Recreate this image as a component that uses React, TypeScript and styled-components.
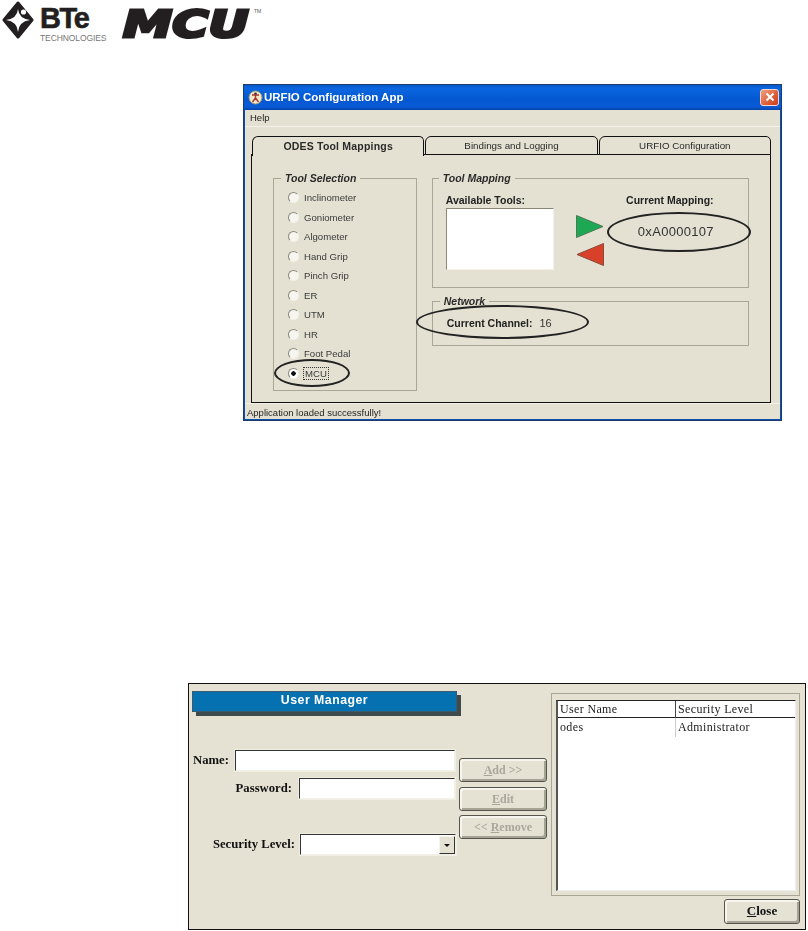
import styled, { createGlobalStyle } from 'styled-components'

const GlobalStyle = createGlobalStyle`
  html, body { margin: 0; padding: 0; background: #fff; }
  body { font-family: "Liberation Sans", Arial, sans-serif; }
`

const Page = styled.div`
  width: 808px;
  height: 931px;
  overflow: hidden;
  display: flex;
  flex-direction: column;
`

/* logos */
const Header = styled.div`
  height: 40px;
  display: flex;
  align-items: flex-start;
  padding: 1px 0 0 2px;
  box-sizing: border-box;
`
const BrandText = styled.div`
  margin-left: 6px;
  width: 68px;
  display: flex;
  flex-direction: column;
`
const Bte = styled.div`
  font-size: 29px;
  font-weight: 700;
  line-height: 26px;
  height: 29px;
  letter-spacing: -1.4px;
  color: #231f20;
  margin-top: 4px;
  -webkit-text-stroke: 0.6px #231f20;
`
const Tech = styled.div`
  font-size: 8.5px;
  line-height: 8px;
  color: #777;
  white-space: nowrap;
  letter-spacing: -0.1px;
`
const Mcu = styled.div`
  margin: 7px 0 0 15px;
  font-family: "DejaVu Sans", sans-serif;
  font-size: 38px;
  line-height: 32px;
  height: 32px;
  width: 130px;
  font-weight: 700;
  font-style: italic;
  color: #231f20;
  -webkit-text-stroke: 3px #231f20;
  transform: scaleX(1.3);
  transform-origin: left center;
  white-space: nowrap;
`
const TradeMark = styled.div`
  margin: 7px 0 0 1px;
  font-size: 5px;
  color: #555;
`

/* XP style window */
const AppRow = styled.div`
  margin: 44px 0 0 243px;
`
const AppWindow = styled.div`
  width: 539px;
  height: 337px;
  box-sizing: border-box;
  background: #e4e1d2;
  border: 2px solid #0b4fa8;
  border-top: 0;
  outline: 1px solid #1c3c70;
  outline-offset: -1px;
  display: flex;
  flex-direction: column;
  filter: blur(0.35px);
`
const TitleBar = styled.div`
  height: 26px;
  flex: none;
  margin: 0 -2px;
  padding: 0 3px 0 5px;
  display: flex;
  align-items: center;
  gap: 1px;
  background: linear-gradient(180deg, #0a56c4 0%, #0a66e0 18%, #0458d0 60%, #0a5ad8 88%, #0443a8 100%);
`
const TitleText = styled.div`
  color: #fff;
  font-size: 11.5px;
  font-weight: 700;
  flex: 1;
`
const CloseBox = styled.div`
  width: 19px;
  height: 17px;
  box-sizing: border-box;
  border: 1px solid #f4d9cc;
  border-radius: 3px;
  background: linear-gradient(135deg, #f0a080, #d8532f 70%, #c84020);
  color: #fff;
  display: flex;
  align-items: center;
  justify-content: center;
`
const MenuBar = styled.div`
  height: 17px;
  flex: none;
  padding-left: 5px;
  font-size: 9.5px;
  line-height: 15px;
  color: #222;
  border-bottom: 1px solid #f3f1e7;
  box-sizing: border-box;
`
const TabArea = styled.div`
  flex: 1;
  padding: 9px 9px 0 6px;
  display: flex;
  flex-direction: column;
  min-height: 0;
`
const TabStrip = styled.div`
  display: flex;
  flex: none;
  height: 19px;
  padding-left: 1px;
  gap: 1px;
  position: relative;
  z-index: 1;
`
const Tab = styled.div<{ $active?: boolean }>`
  flex: 1;
  box-sizing: border-box;
  height: ${p => (p.$active ? '20px' : '19px')};
  border: 1px solid #111;
  border-bottom: ${p => (p.$active ? '0' : '1px solid #111')};
  border-radius: 6px 5px 0 0;
  background: #e4e1d2;
  text-align: center;
  font-size: ${p => (p.$active ? '10.5px' : '9.8px')};
  font-weight: ${p => (p.$active ? 700 : 400)};
  letter-spacing: ${p => (p.$active ? '0.2px' : '0')};
  line-height: 18px;
  color: #2a2a2a;
`
const TabPanel = styled.div`
  flex: 1;
  min-height: 0;
  margin-top: -1px;
  border: 1px solid #111;
  padding: 18px 21px 0 21px;
  display: flex;
  gap: 15px;
  box-sizing: border-box;
`
const Group = styled.fieldset`
  margin: 0;
  padding: 0;
  box-sizing: border-box;
  border: 1px solid #a9a696;
  min-width: 0;
`
const SelectionGroup = styled(Group)`
  width: 144px;
  height: 218px;
  position: relative;
  padding: 4px 0 0 14px;
`
const RightColumn = styled.div`
  display: flex;
  flex-direction: column;
  gap: 8px;
  width: 318px;
`
const MappingGroup = styled(Group)`
  height: 115px;
  padding: 9px 0 0 13px;
  display: flex;
`
const NetworkGroup = styled(Group)`
  height: 50px;
  position: relative;
  padding: 9px 0 0 14px;
`
const GroupTitle = styled.legend`
  margin-left: -7px;
  padding: 0 4px;
  font-size: 10.5px;
  line-height: 11px;
  font-weight: 700;
  font-style: italic;
  color: #2a2a2a;
`
const RadioRow = styled.div`
  display: flex;
  align-items: center;
  height: 19.5px;
  gap: 5px;
  font-size: 9.6px;
  color: #3a3a3a;
`
const RadioDot = styled.span<{ $on?: boolean }>`
  width: 11px;
  height: 11px;
  flex: none;
  box-sizing: border-box;
  border-radius: 50%;
  border: 1px solid;
  border-color: #8b897c #f3f1e8 #f3f1e8 #8b897c;
  background: ${p => (p.$on ? 'radial-gradient(circle, #111 0 2px, #fff 2.5px)' : '#f6f5ef')};
`
const FocusLabel = styled.span`
  outline: 1px dotted #333;
  padding: 0 1px;
`
const RadioOval = styled.div`
  position: absolute;
  left: 0;
  top: 175px;
  width: 76px;
  height: 28px;
  box-sizing: border-box;
  border: 2px solid #222;
  border-radius: 50%;
  pointer-events: none;
`
const ToolsColumn = styled.div`
  width: 108px;
  flex: none;
`
const BoldLabel = styled.div`
  font-size: 10.5px;
  line-height: 14px;
  font-weight: 700;
  color: #222;
  white-space: nowrap;
`
const ToolsBox = styled.div`
  margin-top: 1px;
  height: 62px;
  box-sizing: border-box;
  background: #fff;
  border: 1px solid;
  border-color: #8a8778 #f4f2ea #f4f2ea #8a8778;
`
const Arrows = styled.div`
  display: flex;
  flex-direction: column;
  gap: 5px;
  margin: 22px 0 0 22px;
  width: 28px;
  flex: none;
`
const MappingColumn = styled.div`
  position: relative;
  flex: 1;
  display: flex;
  flex-direction: column;
  align-items: center;
`
const MappingTitle = styled(BoldLabel)`
  margin-right: 12px;
`
const MappingValue = styled.div`
  margin-top: 17px;
  font-size: 13px;
  line-height: 15px;
  letter-spacing: 0.3px;
  color: #333;
`
const MappingOval = styled.div`
  position: absolute;
  left: 3px;
  top: 19px;
  width: 144px;
  height: 40px;
  box-sizing: border-box;
  border: 2px solid #222;
  border-radius: 50%;
`
const ChannelRow = styled.div`
  display: flex;
  gap: 7px;
  font-size: 11px;
  line-height: 14px;
  color: #333;
`
const ChannelOval = styled.div`
  position: absolute;
  left: -17px;
  top: -2px;
  width: 173px;
  height: 34px;
  box-sizing: border-box;
  border: 2px solid #222;
  border-radius: 50%;
`
const StatusBar = styled.div`
  flex: none;
  height: 16px;
  padding-left: 2px;
  font-size: 9.5px;
  line-height: 17px;
  color: #222;
  border-top: 1px solid #f3f1e7;
  box-sizing: border-box;
`

/* user manager dialog */
const DialogRow = styled.div`
  margin: 262px 0 0 188px;
`
const Dialog = styled.div`
  width: 618px;
  height: 247px;
  box-sizing: border-box;
  background: #e6e2d3;
  border: 1px solid #111;
  padding: 7px 5px 0 3px;
  display: flex;
  gap: 3px;
  font-family: "Liberation Serif", "Times New Roman", serif;
  filter: blur(0.3px);
`
const LeftPane = styled.div`
  width: 356px;
  flex: none;
`
const Banner = styled.div`
  width: 265px;
  height: 21px;
  box-sizing: border-box;
  background: #0671b0;
  border: 1px solid #3a5a70;
  box-shadow: 4px 4px 0 #3f4a4c;
  color: #fff;
  text-align: center;
  font-family: "Liberation Sans", Arial, sans-serif;
  font-size: 12.3px;
  font-weight: 700;
  line-height: 17px;
  letter-spacing: 0.5px;
`
const FormArea = styled.div`
  margin-top: 38px;
  display: flex;
  gap: 3px;
`
const Fields = styled.div`
  width: 264px;
  flex: none;
  display: flex;
  flex-direction: column;
`
const FieldRow = styled.div<{ $top?: number; $gap?: number; $inset?: number }>`
  display: flex;
  justify-content: flex-end;
  align-items: center;
  gap: ${p => p.$gap ?? 7}px;
  margin-top: ${p => p.$top ?? 0}px;
  padding-right: ${p => p.$inset ?? 1}px;
`
const NameRow = styled(FieldRow)`
  justify-content: flex-start;
  padding-left: 1px;
  gap: 6px;
`
const FieldLabel = styled.label`
  font-size: 12.7px;
  font-weight: 700;
  color: #111;
  white-space: nowrap;
`
const SunkenBox = styled.div<{ $w: number }>`
  width: ${p => p.$w}px;
  height: 21px;
  box-sizing: border-box;
  background: #fff;
  border: 1px solid;
  border-color: #333 #f3f0e6 #f3f0e6 #333;
  box-shadow: 0 0 0 1px #f0ede2;
  display: flex;
  justify-content: flex-end;
  align-items: flex-end;
`
const DropButton = styled.div`
  width: 16px;
  height: 18px;
  box-sizing: border-box;
  background: #e6e2d3;
  border: 1px solid;
  border-color: #f5f3ea #333 #333 #f5f3ea;
  display: flex;
  align-items: center;
  justify-content: center;
  &::after {
    content: '';
    border-top: 3px solid #111;
    border-left: 3px solid transparent;
    border-right: 3px solid transparent;
  }
`
const Buttons = styled.div`
  margin-top: 8px;
  width: 88px;
  display: flex;
  flex-direction: column;
  gap: 4.5px;
`
const WinButton = styled.div<{ $disabled?: boolean }>`
  height: 24px;
  box-sizing: border-box;
  border: 1px solid #55554c;
  border-radius: 3px;
  background: #e6e2d3;
  box-shadow: inset 2px 2px 0 #f7f5ee, inset -2px -2px 0 #a6a395;
  text-align: center;
  font-size: 12px;
  font-weight: 700;
  line-height: 22px;
  color: ${p => (p.$disabled ? '#a9a79c' : '#111')};
`
const RightPane = styled.div`
  flex: 1;
  display: flex;
  flex-direction: column;
  align-items: flex-end;
`
const ListFrame = styled.div`
  width: 249px;
  height: 203px;
  margin-top: 2px;
  margin-right: 1px;
  box-sizing: border-box;
  border: 1px solid #a9a696;
  padding: 6px 3px 4px 4px;
`
const ListBox = styled.div`
  height: 100%;
  box-sizing: border-box;
  background: #fff;
  border-left: 2px solid #555;
  border-top: 1px solid #222;
  border-right: 1px solid #eee;
  border-bottom: 1px solid #eee;
  font-size: 12px;
  color: #222;
`
const ListRow = styled.div<{ $head?: boolean }>`
  display: grid;
  grid-template-columns: 117px 1fr;
  height: ${p => (p.$head ? '16px' : '18px')};
  line-height: ${p => (p.$head ? '17px' : '19px')};
  border-bottom: ${p => (p.$head ? '1px solid #222' : '0')};
  letter-spacing: 0.35px;
`
const ListCell = styled.div<{ $divider?: string }>`
  padding-left: 2px;
  border-left: ${p => (p.$divider ? `1px solid ${p.$divider}` : '0')};
`
const CloseButton = styled(WinButton)`
  width: 76px;
  height: 25px;
  margin: 3px 1px 0 0;
  font-size: 13px;
`

const tools = ['Inclinometer', 'Goniometer', 'Algometer', 'Hand Grip', 'Pinch Grip', 'ER', 'UTM', 'HR', 'Foot Pedal']

export default function App() {
  return (
    <Page>
      <GlobalStyle />
      <Header>
        <svg width="32" height="38" viewBox="0 0 32 38">
          <path d="M16 2 L30 19 L16 36 L2 19 Z" fill="#231f20" stroke="#231f20" strokeWidth="3" strokeLinejoin="round" />
          <path d="M16 8 Q16.8 17.5 28 19 Q16.8 20.5 16 31 Q15.2 20.5 4 19 Q15.2 17.5 16 8 Z" fill="#fff" />
          <circle cx="21.5" cy="11" r="2.6" fill="#fff" />
        </svg>
        <BrandText>
          <Bte>BTe</Bte>
          <Tech>TECHNOLOGIES</Tech>
        </BrandText>
        <Mcu>MCU</Mcu>
        <TradeMark>TM</TradeMark>
      </Header>

      <AppRow>
        <AppWindow>
          <TitleBar>
            <svg width="15" height="15" viewBox="0 0 15 15">
              <circle cx="7.5" cy="7.5" r="6.5" fill="#f0e8c8" stroke="#9a9a80" />
              <circle cx="7.5" cy="4" r="1.4" fill="#333" />
              <path d="M4 5 L11 5 M7.5 5 L7.5 8 L4.5 12 M7.5 8 L10.5 12" stroke="#a33" strokeWidth="1.4" fill="none" />
            </svg>
            <TitleText>URFIO Configuration App</TitleText>
            <CloseBox>
              <svg width="10" height="10" viewBox="0 0 10 10">
                <path d="M1.5 1.5 L8.5 8.5 M8.5 1.5 L1.5 8.5" stroke="#fff" strokeWidth="2" />
              </svg>
            </CloseBox>
          </TitleBar>
          <MenuBar>Help</MenuBar>
          <TabArea>
            <TabStrip>
              <Tab $active>ODES Tool Mappings</Tab>
              <Tab>Bindings and Logging</Tab>
              <Tab>URFIO Configuration</Tab>
            </TabStrip>
            <TabPanel>
              <SelectionGroup>
                <GroupTitle>Tool Selection</GroupTitle>
                {tools.map(t => (
                  <RadioRow key={t}>
                    <RadioDot />
                    {t}
                  </RadioRow>
                ))}
                <RadioRow>
                  <RadioDot $on />
                  <FocusLabel>MCU</FocusLabel>
                </RadioRow>
                <RadioOval />
              </SelectionGroup>
              <RightColumn>
                <MappingGroup>
                  <GroupTitle>Tool Mapping</GroupTitle>
                  <ToolsColumn>
                    <BoldLabel>Available Tools:</BoldLabel>
                    <ToolsBox />
                  </ToolsColumn>
                  <Arrows>
                    <svg width="28" height="23" viewBox="0 0 28 23">
                      <path d="M0.5 0.5 L27 11.5 L0.5 22.5 Z" fill="#1fa854" stroke="#4c7a58" />
                    </svg>
                    <svg width="28" height="23" viewBox="0 0 28 23">
                      <path d="M27.5 0.5 L1 11.5 L27.5 22.5 Z" fill="#d8402a" stroke="#8a4a3a" />
                    </svg>
                  </Arrows>
                  <MappingColumn>
                    <MappingTitle>Current Mapping:</MappingTitle>
                    <MappingValue>0xA0000107</MappingValue>
                    <MappingOval />
                  </MappingColumn>
                </MappingGroup>
                <NetworkGroup>
                  <GroupTitle>Network</GroupTitle>
                  <ChannelRow>
                    <BoldLabel>Current Channel:</BoldLabel>
                    16
                  </ChannelRow>
                  <ChannelOval />
                </NetworkGroup>
              </RightColumn>
            </TabPanel>
          </TabArea>
          <StatusBar>Application loaded successfully!</StatusBar>
        </AppWindow>
      </AppRow>

      <DialogRow>
        <Dialog>
          <LeftPane>
            <Banner>User Manager</Banner>
            <FormArea>
              <Fields>
                <NameRow>
                  <FieldLabel>Name:</FieldLabel>
                  <SunkenBox $w={220} />
                </NameRow>
                <FieldRow $top={7}>
                  <FieldLabel>Password:</FieldLabel>
                  <SunkenBox $w={156} />
                </FieldRow>
                <FieldRow $top={35} $gap={5} $inset={0}>
                  <FieldLabel>Security Level:</FieldLabel>
                  <SunkenBox $w={156}>
                    <DropButton />
                  </SunkenBox>
                </FieldRow>
              </Fields>
              <Buttons>
                <WinButton $disabled><u>A</u>dd &gt;&gt;</WinButton>
                <WinButton $disabled><u>E</u>dit</WinButton>
                <WinButton $disabled>&lt;&lt; <u>R</u>emove</WinButton>
              </Buttons>
            </FormArea>
          </LeftPane>
          <RightPane>
            <ListFrame>
              <ListBox>
                <ListRow $head>
                  <ListCell>User Name</ListCell>
                  <ListCell $divider="#444">Security Level</ListCell>
                </ListRow>
                <ListRow>
                  <ListCell>odes</ListCell>
                  <ListCell $divider="#ccc">Administrator</ListCell>
                </ListRow>
              </ListBox>
            </ListFrame>
            <CloseButton><u>C</u>lose</CloseButton>
          </RightPane>
        </Dialog>
      </DialogRow>
    </Page>
  )
}
